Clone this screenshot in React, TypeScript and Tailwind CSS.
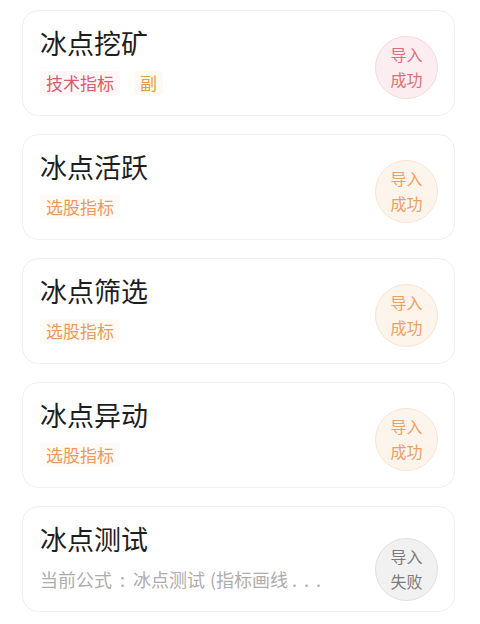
import React from "react";

type Tag = { text: string; cls: string };
type Item = {
  title: string;
  tags?: Tag[];
  sub?: boolean;
  status: "red" | "orange" | "gray";
  l1: string;
  l2: string;
};

const items: Item[] = [
  {
    title: "冰点挖矿",
    tags: [
      { text: "技术指标", cls: "text-[#d95c6c] bg-[#fef6f7]" },
      { text: "副", cls: "text-[#e39a45] bg-[#fefaf2]" },
    ],
    status: "red",
    l1: "导入",
    l2: "成功",
  },
  {
    title: "冰点活跃",
    tags: [{ text: "选股指标", cls: "text-[#eb9a5c] bg-[#fefaf5]" }],
    status: "orange",
    l1: "导入",
    l2: "成功",
  },
  {
    title: "冰点筛选",
    tags: [{ text: "选股指标", cls: "text-[#eb9a5c] bg-[#fefaf5]" }],
    status: "orange",
    l1: "导入",
    l2: "成功",
  },
  {
    title: "冰点异动",
    tags: [{ text: "选股指标", cls: "text-[#eb9a5c] bg-[#fefaf5]" }],
    status: "orange",
    l1: "导入",
    l2: "成功",
  },
  {
    title: "冰点测试",
    sub: true,
    status: "gray",
    l1: "导入",
    l2: "失败",
  },
];

const badgeCls: Record<Item["status"], string> = {
  red: "bg-[#fcedf0] border-[#f5d9de] text-[#d8707e] mt-[8px]",
  orange: "bg-[#fdf4ec] border-[#f8e4d2] text-[#eba066] mt-[8px]",
  gray: "bg-[#f1f1f1] border-[#e0e0e0] text-[#7a7a7a] mt-[20px]",
};

export default function App() {
  return (
    <div
      className="w-[480px] h-[624px] bg-white overflow-hidden pt-[10px]"
      style={{ fontFamily: '"Noto Sans CJK SC", "Noto Sans", sans-serif' }}
    >
      <div className="ml-[22px] w-[433px] flex flex-col gap-[18px]">
        {items.map((it, i) => (
          <div
            key={i}
            className="h-[106px] rounded-[16px] border border-[#efefef] bg-white flex items-center pl-[17px] pr-[16px]"
          >
            <div className="flex-1 min-w-0 self-start pt-[15px] flex flex-col">
              <div className="text-[27px] leading-[34px] text-[#1e1e1e]">{it.title}</div>
              {it.tags && (
                <div className="flex gap-[14px] mt-[11px]">
                  {it.tags.map((t, j) => (
                    <span
                      key={j}
                      className={`text-[17px] leading-[24px] px-[6px] rounded-[4px] ${t.cls}`}
                    >
                      {t.text}
                    </span>
                  ))}
                </div>
              )}
              {it.sub && (
                <div className="text-[18px] leading-[24px] mt-[11px] text-[#adadad] whitespace-nowrap">
                  当前公式<span className="mx-[8px]">:</span>冰点测试<span className="ml-[5px]">(</span>指标画线
                  <span className="tracking-[7px] ml-[4px]">...</span>
                </div>
              )}
            </div>
            <div
              className={`w-[63px] h-[63px] shrink-0 rounded-full border flex flex-col items-center justify-center text-[16px] leading-[25px] ${badgeCls[it.status]}`}
            >
              <span>{it.l1}</span>
              <span>{it.l2}</span>
            </div>
          </div>
        ))}
      </div>
    </div>
  );
}
